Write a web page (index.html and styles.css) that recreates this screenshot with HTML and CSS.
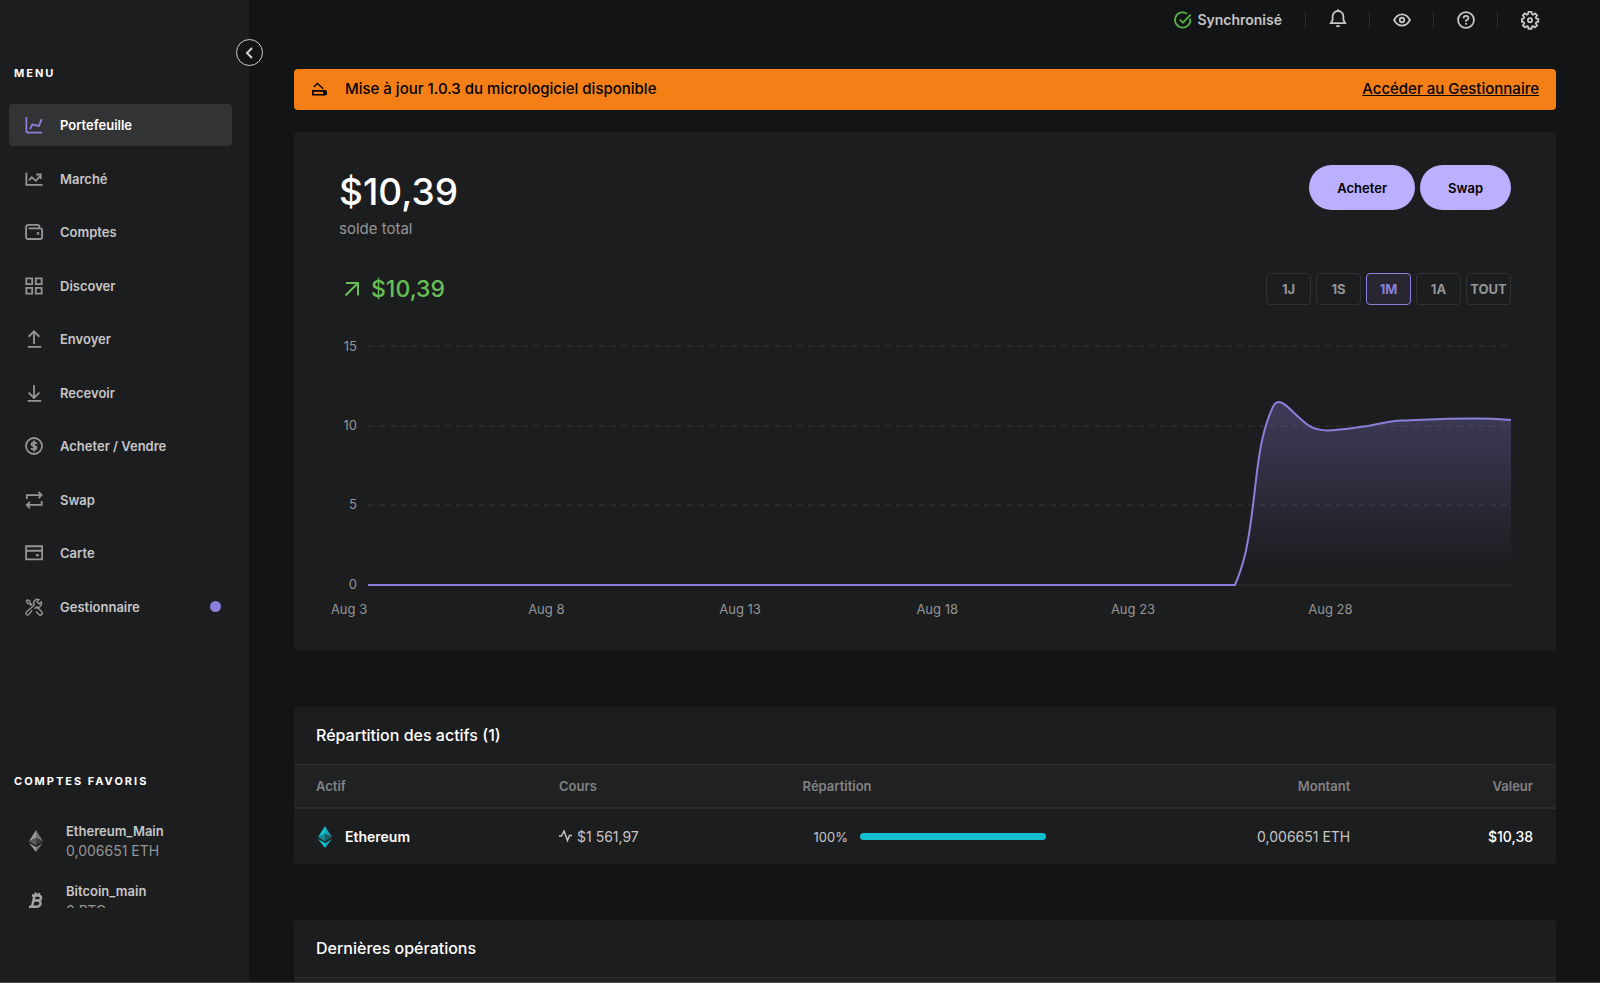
FILE: index.html
```html
<!DOCTYPE html>
<html lang="fr">
<head>
<meta charset="utf-8">
<title>Portefeuille</title>
<link rel="stylesheet" href="styles.css">
</head>
<body>
<div class="app">
  <aside class="sidebar">
    <button class="collapse" type="button" aria-label="Réduire le menu">
      <svg width="12" height="14" viewBox="0 0 12 14"><path d="M8 2 3 7 8 12" fill="none" stroke="currentColor" stroke-width="2"/></svg>
    </button>
    <h2 class="side-title">MENU</h2>
    <nav class="menu">
      <a class="menu-item active" href="#"><svg class="icon" viewBox="0 0 20 20"><path d="M1.500 1v15A2.500 2.500 0 0 0 4 18.500H19M5.500 14.500 8 9.500l7.500 1.500L18.500 3.500"/></svg>Portefeuille</a>
      <a class="menu-item" href="#"><svg class="icon" viewBox="0 0 20 20"><path d="M1.500 3V16.500H19.500M4.500 11.500 7.500 8l4.500 4L17 6.500"/><path d="M12.500 5H17.500V10"/></svg>Marché</a>
      <a class="menu-item" href="#"><svg class="icon" viewBox="0 0 20 20"><path d="M16 6V4.500A2 2 0 0 0 14 2H4A2.500 2.500 0 0 0 1.200 4.500V15.500A2 2 0 0 0 3.200 17.800H17A2 2 0 0 0 19 15.800V8A2 2 0 0 0 17 6H4"/><circle cx="14.500" cy="11.700" r=".6"/></svg>Comptes</a>
      <a class="menu-item" href="#"><svg class="icon" viewBox="0 0 20 20"><path d="M1.500 1.500h6.500v6.500H1.500zM12 1.500h6.500v6.500H12zM1.500 12h6.500v6.500H1.500zM12 12h6.500v6.500H12z"/></svg>Discover</a>
      <a class="menu-item" href="#"><svg class="icon" viewBox="0 0 20 20"><path d="M10 15.500V1.500M4 7.500 10 1.500l6 6M3 18.800h15"/></svg>Envoyer</a>
      <a class="menu-item" href="#"><svg class="icon" viewBox="0 0 20 20"><path d="M10 1V15.500M4 9.500 10 15.500l6-6M3 18.800h15"/></svg>Recevoir</a>
      <a class="menu-item" href="#"><svg class="icon" viewBox="0 0 20 20"><circle cx="10" cy="10" r="8.900"/><path d="M10 3.800v12.400M13 7.800Q12.500 6 10 6T7.200 8Q7.200 9.500 10 10T12.800 12Q12.800 14 10 14T7 12.200"/></svg>Acheter / Vendre</a>
      <a class="menu-item" href="#"><svg class="icon" viewBox="0 0 20 20"><path d="M2 9V4.500H18.500M15 1l3.500 3.500L15 8M18.500 11v4.500H2M5.500 12 2 15.500 5.500 19"/></svg>Swap</a>
      <a class="menu-item" href="#"><svg class="icon" viewBox="0 0 20 20"><path d="M1.200 2.500h17.800v14.500H1.200zM1.200 7.500H19M12 12.500h3.500"/></svg>Carte</a>
      <a class="menu-item" href="#"><svg class="icon tools" viewBox="0 0 20 20"><path d="M8 13.500 4.500 18.200A1.800 1.800 0 0 1 1.600 15.500L10.200 8A4.300 4.300 0 0 1 15.500 1.800L13.300 4.200 15.800 6.700 18.200 4.500A4.300 4.300 0 0 1 12.500 10L10.500 12M8 8 5.800 5.800 5.500 3.500 2.800 2 1.500 3.300 3 6 5.200 6.300 7 8.200M13 11.500 15.500 12 18.500 15.200A2 2 0 0 1 15.500 18.300L12.300 15"/></svg>Gestionnaire<span class="dot"></span></a>
    </nav>
    <section class="favorites">
      <h2 class="side-title">COMPTES FAVORIS</h2>
      <div class="fav-list">
        <a class="fav" href="#">
          <svg class="coin" viewBox="0 0 14 22"><path fill="#9a9a9b" d="M7 0 0 11.300 7 8z"/><path fill="#737374" d="M7 0v8l7 3.300z"/><path fill="#5b5b5c" d="M7 8 0 11.300 7 15.500z"/><path fill="#3f3f40" d="M7 8l7 3.300L7 15.500z"/><path fill="#9a9a9b" d="M0 13 7 22v-5z"/><path fill="#737374" d="M14 13 7 22v-5z"/></svg>
          <span class="fav-text"><span class="fav-name">Ethereum_Main</span><span class="fav-amount">0,006651 ETH</span></span>
        </a>
        <a class="fav" href="#">
          <svg class="coin" viewBox="0 0 14 22"><path fill="none" stroke="#a3a3a4" stroke-width="2.500" d="M3 5.500h5.900c4.600 0 3.800 5 0 5H4.500 8.400c4.800 0 3.800 6.200-1 6.200H0M5.600 5.500 3 16.700M7 2.500 6.200 5.500M10.200 3 9.400 6M4 16.500l-.7 3M7 16.500l-.7 3"/></svg>
          <span class="fav-text"><span class="fav-name">Bitcoin_main</span><span class="fav-amount">0 BTC</span></span>
        </a>
      </div>
    </section>
  </aside>

  <main class="main">
    <header class="topbar">
      <span class="sync"><svg class="icon" viewBox="0 0 20 20"><path d="M18 8.500A8.500 8.500 0 1 1 14.500 3M6.500 9.500l3.500 3.500L18.500 4"/></svg>Synchronisé</span>
      <button class="tool" type="button" aria-label="Notifications"><svg class="icon" viewBox="0 0 20 20"><path d="M2 13.500 4 10V6a6 6 0 0 1 12 0v4l2 3.500zM10 0V-2M8 16.800h4"/></svg></button>
      <button class="tool" type="button" aria-label="Masquer les montants"><svg class="icon" viewBox="0 0 20 20"><path d="M1.200 10Q4.500 3.700 10 3.700T18.800 10Q15.500 16.300 10 16.300T1.200 10z"/><circle cx="10" cy="10" r="2.500"/></svg></button>
      <button class="tool" type="button" aria-label="Aide"><svg class="icon" viewBox="0 0 20 20"><circle cx="10" cy="10" r="8.800"/><path d="M7.300 8Q7.300 5.500 10 5.500T12.700 8Q12.700 9.300 10 10.500V12M10 13.300v2"/></svg></button>
      <button class="tool" type="button" aria-label="Paramètres"><svg class="icon" viewBox="0 0 20 20"><path d="M8.300 1h3.400l.5 2.500 1.300.6 2.200-1.400 2.200 2.200-1.500 2.200.6 1.300 2.200.5v3l-2.200.5-.6 1.400 1.500 2.200-2.200 2.200-2.200-1.500-1.300.6-.5 2.400H8.300l-.5-2.400-1.300-.6-2.200 1.500L2.100 16l1.500-2.200-.6-1.400L1 11.900v-3l2-.5.6-1.300-1.500-2.200 2.200-2.200 2.200 1.400 1.300-.6z"/><circle cx="10" cy="10.200" r="2.300"/></svg></button>
    </header>

    <div class="banner">
      <svg class="banner-icon" viewBox="0 0 14 14"><path fill="none" stroke="currentColor" stroke-width="1.500" d="M.8 9.200h10.700v3.600H.8z"/><path fill="none" stroke="currentColor" stroke-width="1.300" d="M1.800 5.500 5 2.300 10.500 7.300"/><path fill="currentColor" d="M10.500 8.500h1.300a2.300 2.300 0 0 1 0 5h-1.300z"/></svg>
      <span class="banner-text">Mise à jour 1.0.3 du micrologiciel disponible</span>
      <a class="banner-link" href="#">Accéder au Gestionnaire</a>
    </div>

    <section class="card portfolio">
      <div class="balance-row">
        <div class="balance">
          <div class="balance-value">$10,39</div>
          <div class="balance-label">solde total</div>
        </div>
        <div class="actions">
          <button class="pill" type="button">Acheter</button>
          <button class="pill" type="button">Swap</button>
        </div>
      </div>
      <div class="range-row">
        <div class="delta"><svg width="16" height="16" viewBox="0 0 16 16"><path d="M1.500 14.500 14 2M2 2H14V14.500" fill="none" stroke="currentColor" stroke-width="2"/></svg>$10,39</div>
        <div class="ranges">
          <button class="range" type="button">1J</button>
          <button class="range" type="button">1S</button>
          <button class="range selected" type="button">1M</button>
          <button class="range" type="button">1A</button>
          <button class="range" type="button">TOUT</button>
        </div>
      </div>
      <div class="chart">
        <svg class="plot" role="img" aria-label="Évolution du solde">
          <defs><linearGradient id="fade" x1="0" y1="0" x2="0" y2="1"><stop offset="0" stop-color="#8a80db" stop-opacity=".3"/><stop offset=".25" stop-color="#8a80db" stop-opacity=".23"/><stop offset=".9" stop-color="#8a80db" stop-opacity="0"/></linearGradient></defs>
          <g class="grid-lines">
            <line x1="0" x2="100%" y1="41" y2="41"/><line x1="0" x2="100%" y1="121" y2="121"/><line x1="0" x2="100%" y1="200" y2="200"/>
          </g>
          <line class="base-line" x1="0" x2="100%" y1="280" y2="280"/>
          <svg x="0" y="0" width="100%" height="312" viewBox="0 0 1143 312" preserveAspectRatio="none">
            <path fill="url(#fade)" d="M867 280C873 266 877 254 880 235C888 190 888 150 899 117Q905 99 908 98C914 93 924 107 935 116C943 123 948 125 959 125.500C975 125 990 122 1000 121C1012 119 1020 116 1034 115.500C1055 115 1070 113.500 1105 113.500Q1125 113.500 1143 115V280z"/>
            <path class="curve" d="M0 280H867C873 266 877 254 880 235C888 190 888 150 899 117Q905 99 908 98C914 93 924 107 935 116C943 123 948 125 959 125.500C975 125 990 122 1000 121C1012 119 1020 116 1034 115.500C1055 115 1070 113.500 1105 113.500Q1125 113.500 1143 115"/>
          </svg>
          <g class="y-labels"><text x="-11" y="46">15</text><text x="-11" y="125">10</text><text x="-11" y="204">5</text><text x="-11" y="284">0</text></g>
          <g class="x-labels"><text x="-1.660%" y="309">Aug 3</text><text x="15.600%" y="309">Aug 8</text><text x="32.550%" y="309">Aug 13</text><text x="49.800%" y="309">Aug 18</text><text x="66.930%" y="309">Aug 23</text><text x="84.200%" y="309">Aug 28</text></g>
        </svg>
      </div>
    </section>

    <section class="card">
      <h3 class="card-title">Répartition des actifs (1)</h3>
      <table class="assets">
        <thead><tr><th class="c-asset">Actif</th><th class="c-mid">Cours</th><th class="c-mid">Répartition</th><th class="c-amount">Montant</th><th class="c-value">Valeur</th></tr></thead>
        <tbody><tr>
          <td class="c-asset"><div class="cell"><svg class="coin" viewBox="0 0 14 22"><path fill="#11c3d3" d="M7 0 0 11.300 7 8z"/><path fill="#1d9fac" d="M7 0v8l7 3.300z"/><path fill="#1a8793" d="M7 8 0 11.300 7 15.500z"/><path fill="#1b5860" d="M7 8l7 3.300L7 15.500z"/><path fill="#11c3d3" d="M0 13 7 22v-5z"/><path fill="#1d9fac" d="M14 13 7 22v-5z"/></svg><span class="asset-name">Ethereum</span></div></td>
          <td class="c-mid"><div class="price"><svg width="13" height="13" viewBox="0 0 13 13"><path d="M0 6h2.500L5 1 8.500 10.500 10.500 5.500H13" fill="none" stroke="currentColor" stroke-width="1.500"/></svg>$1 561,97</div></td>
          <td class="c-mid"><div class="share"><span class="percent">100%</span><span class="bar"><span class="bar-fill" style="width:100%"></span></span></div></td>
          <td class="c-amount">0,006651 ETH</td>
          <td class="c-value strong">$10,38</td>
        </tr></tbody>
      </table>
    </section>

    <section class="card">
      <h3 class="card-title">Dernières opérations</h3>
      <div class="operations"></div>
    </section>
  </main>
</div>
</body>
</html>
```
FILE: styles.css
```css
* { box-sizing: border-box; }

body {
  margin: 0;
  background: #131416;
  color: #fff;
  font-family: Inter, "Liberation Sans", sans-serif;
  font-size: 14px;
  line-height: 20px;
}

button {
  margin: 0;
  padding: 0;
  border: 0;
  background: none;
  color: inherit;
  font: inherit;
}

a { color: inherit; text-decoration: none; }
svg { display: block; flex: none; }

.app {
  display: flex;
  height: 100vh;
  overflow: hidden;
  border-bottom: 1px solid #4b4c4e;
}

.icon {
  width: 18px;
  height: 18px;
  overflow: visible;
  fill: none;
  stroke: currentColor;
  stroke-width: 2;
}

.icon.tools { stroke-width: 1.6; }

/* Sidebar */
.sidebar {
  position: relative;
  display: flex;
  flex-direction: column;
  flex: none;
  width: 249px;
  padding: 63px 0 74px;
  background: #1c1d1f;
}

.collapse {
  position: absolute;
  top: 39px;
  right: -14px;
  display: grid;
  place-items: center;
  width: 27px;
  height: 27px;
  border: 1px solid #d0d0d0;
  border-radius: 50%;
  background: #131416;
  color: #d0d0d0;
}

.side-title {
  margin: 0;
  padding-left: 14px;
  font-size: 11px;
  font-weight: 700;
  letter-spacing: 2px;
}

.menu {
  display: flex;
  flex-direction: column;
  justify-content: space-between;
  height: 524px;
  margin-top: 21px;
  padding: 0 17px 0 9px;
}

.menu-item {
  display: flex;
  align-items: center;
  gap: 17px;
  height: 42px;
  padding: 0 11px 0 16px;
  border-radius: 4px;
  color: #c6c6c7;
  font-weight: 600;
  font-size: 13px;
}

.menu-item .icon { color: #949596; }
.menu-item.active { background: #323335; color: #fff; }
.menu-item.active .icon { color: #8a80db; }

.dot {
  width: 11px;
  height: 11px;
  margin-left: auto;
  border-radius: 50%;
  background: #8a80db;
}

.favorites { margin-top: auto; }

.fav-list {
  height: 117px;
  padding-top: 30px;
  overflow: hidden;
}

.fav {
  display: flex;
  align-items: center;
  gap: 23px;
  height: 40px;
  margin-bottom: 20px;
  padding-left: 29px;
}

.coin { width: 14px; height: 22px; }
.fav-text { display: flex; flex-direction: column; }
.fav-name { color: #c6c6c7; font-size: 13px; font-weight: 600; }
.fav-amount { color: #949596; }

/* Main column */
.main {
  flex: 1;
  min-width: 0;
  padding: 0 44px 0 45px;
}

.topbar {
  display: flex;
  justify-content: flex-end;
  align-items: center;
  height: 40px;
  color: #c6c6c7;
}

.sync {
  display: flex;
  align-items: center;
  gap: 5px;
  margin-right: 23px;
  font-weight: 600;
}

.sync .icon { color: #55b146; }

.tool {
  display: grid;
  place-items: center;
  width: 64px;
  height: 18px;
  border-left: 1px solid #2a2b2d;
}

.tool:last-child { margin-right: -5px; }

.banner {
  display: flex;
  align-items: center;
  height: 41px;
  margin-top: 29px;
  padding: 0 17px 2px 18px;
  border-radius: 4px;
  background: #f57f17;
  color: #000;
  font-size: 15px;
  font-weight: 500;
}

.banner-icon { width: 15px; height: 15px; }
.banner-text { margin-left: 18px; }
.banner-link { margin-left: auto; text-decoration: underline; }

.card {
  margin-bottom: 56px;
  border-radius: 4px;
  background: #1c1d1f;
}

.portfolio {
  margin-top: 22px;
  padding: 33px 45px 34px;
}

.balance-row, .range-row {
  display: flex;
  justify-content: space-between;
  align-items: flex-start;
}

.balance { padding-top: 4px; }
.balance-value { font-size: 37px; font-weight: 500; line-height: 45px; }
.balance-label { margin-top: 5px; color: #949596; font-size: 15px; }

.actions, .ranges { display: flex; gap: 5px; }

.pill {
  height: 45px;
  padding: 0 28px;
  border-radius: 23px;
  background: #bbb0ff;
  color: #000;
  font-size: 13px;
  font-weight: 600;
}

.range-row { margin-top: 34px; align-items: center; }

.delta {
  display: flex;
  align-items: center;
  gap: 11px;
  padding-left: 5px;
  color: #66be54;
  font-size: 23px;
  font-weight: 500;
}

.range {
  width: 45px;
  height: 32px;
  border: 1px solid #303133;
  border-radius: 4px;
  color: #949596;
  font-size: 13px;
  font-weight: 700;
}

.range.selected {
  border-color: #8a80db;
  background: #272631;
  color: #8a80db;
}

.chart { padding-left: 29px; }
.plot { width: 100%; height: 312px; overflow: visible; }
.grid-lines line { stroke: #343537; stroke-width: 1; stroke-dasharray: 6 5; }
.base-line { stroke: #303133; stroke-width: 1; }
.curve { fill: none; stroke: #8a80db; stroke-width: 2; vector-effect: non-scaling-stroke; }
.plot text { fill: #949596; font-size: 13px; }
.y-labels { text-anchor: end; }
.x-labels { text-anchor: middle; }

/* Tables */
.card-title {
  margin: 0;
  padding: 18px 22px;
  font-size: 16px;
  font-weight: 500;
  line-height: 21px;
}

.assets {
  width: 100%;
  table-layout: fixed;
  border-collapse: separate;
  border-spacing: 0;
}

.assets th, .assets td { padding: 0; text-align: left; font-weight: 400; color: #c6c6c7; }

.assets th {
  height: 45px;
  border-top: 1px solid #2c2d2f;
  border-bottom: 2px solid #2c2d2f;
  background: #202123;
  color: #828384;
  font-size: 13px;
  font-weight: 600;
}

.assets td { height: 55px; }
.assets .c-asset { width: 21%; padding-left: 22px; }
.assets .c-mid { width: 19.3%; }
.assets .c-amount { width: 24.1%; text-align: right; }
.assets .c-value { padding-right: 23px; text-align: right; }
.assets .strong { color: #fff; font-weight: 500; }

.cell { display: flex; align-items: center; gap: 13px; padding-left: 2px; }
.asset-name { color: #fff; font-weight: 600; }
.price { display: flex; align-items: center; gap: 5px; }

.share {
  display: flex;
  align-items: center;
  gap: 12px;
  padding-left: 11px;
}

.percent { font-size: 13px; }
.bar { flex: none; width: 186px; height: 7px; border-radius: 4px; background: #2c2d2f; }
.bar-fill { display: block; height: 7px; border-radius: 4px; background: #11bfcf; }

.operations {
  height: 45px;
  border-top: 1px solid #2c2d2f;
  background: #202123;
}
```
